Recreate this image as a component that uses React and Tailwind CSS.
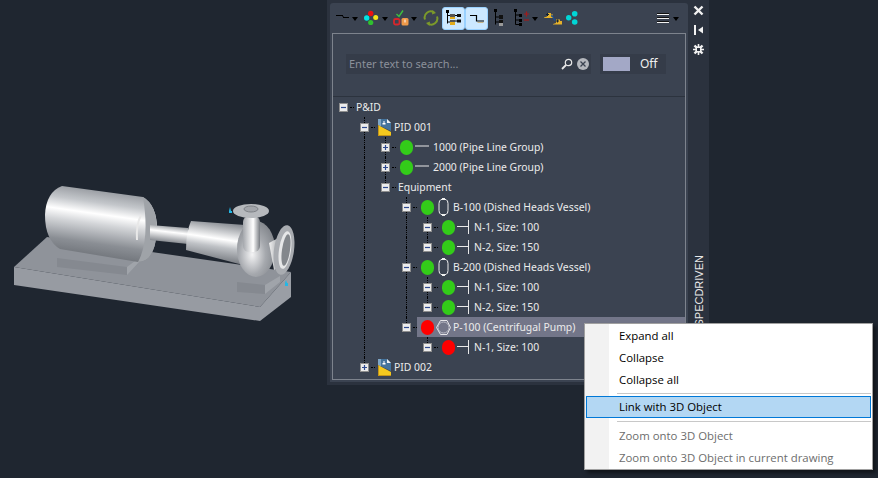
import React from 'react'

const font = { tree: "font-['Noto_Sans',sans-serif]" }

// small black dropdown triangle used by the toolbar
function Caret({ gap = 'ml-[3px]' }) {
  return (
    <svg width="6" height="4" viewBox="0 0 6 4" className={`${gap} mt-[2px]`}>
      <path d="M0 0h6L3 4z" fill="#000" />
    </svg>
  )
}

function LineIcon() {
  return (
    <svg width="13" height="8" viewBox="0 0 13 8">
      <path d="M0 1.500h7M7 3.500h6" stroke="#000" strokeWidth="1.200" fill="none" />
      <path d="M6.500 1.500l1 2" stroke="#000" />
    </svg>
  )
}

function DotsIcon() {
  return (
    <svg width="15" height="17" viewBox="0 0 15 17">
      <circle cx="2.700" cy="8" r="2.700" fill="#00e5e5" />
      <circle cx="6.700" cy="3.500" r="2.700" fill="#ee1111" />
      <circle cx="11.700" cy="7.500" r="2.500" fill="#f5e617" />
      <circle cx="6.700" cy="12.500" r="2.600" fill="#2fc12f" />
    </svg>
  )
}

function CheckIcon() {
  return (
    <svg width="16" height="18" viewBox="0 0 16 18">
      <path d="M3.500 5l2.500 2.500 4-6" stroke="#3fc03f" strokeWidth="1.400" fill="none" />
      <rect x="1" y="10" width="5.500" height="5.500" rx="1.500" fill="none" stroke="#d8262c" strokeWidth="1.800" />
      <rect x="8.500" y="9" width="7" height="7.500" rx="1.500" fill="#ef9a4a" />
      <rect x="11.500" y="10.500" width="1" height="3" fill="#fff" />
    </svg>
  )
}

function RefreshIcon() {
  return (
    <svg width="16" height="16" viewBox="0 0 16 16" fill="none">
      <path d="M2 9.500A6 6 0 0 1 11 2.500" stroke="#7c9a2a" strokeWidth="2" />
      <path d="M14 6.500A6 6 0 0 1 5 13.500" stroke="#7c9a2a" strokeWidth="2" />
      <path d="M9.500 0l3.500 3-4 1.500zM6.500 16L3 13l4-1.500z" fill="#7c9a2a" />
    </svg>
  )
}

function TreePidIcon() {
  return (
    <svg width="15" height="16" viewBox="0 0 15 16">
      <rect x="0" y="0" width="3" height="3" fill="#000" />
      <path d="M1.500 3v10.500M1.500 5.500h3M1.500 12h3" stroke="#000" />
      <rect x="4" y="4" width="5" height="3" fill="#555" />
      <rect x="4" y="7" width="5" height="2" fill="#e3ac1c" />
      <rect x="4" y="10" width="5" height="2" fill="#555" />
      <rect x="4" y="12" width="5" height="3" fill="#e3ac1c" />
      <path d="M9 5.500h2M9 11h2" stroke="#000" />
      <rect x="11" y="4" width="4" height="3" fill="#111" />
      <rect x="11" y="9.500" width="4" height="3" fill="#111" />
    </svg>
  )
}

function StepIcon() {
  return (
    <svg width="14" height="9" viewBox="0 0 14 9">
      <path d="M0 1.500h6.500v5.500H14" stroke="#000" strokeWidth="1.200" fill="none" />
      <path d="M7.500 8.500h6" stroke="#c9b68a" />
    </svg>
  )
}

function BlackTreeIcon() {
  return (
    <svg width="10" height="18" viewBox="0 0 10 18">
      <rect x="0" y="0" width="3" height="3" fill="#000" />
      <path d="M1.500 3v12.500M1.500 8h4M1.500 13h4" stroke="#000" />
      <rect x="5" y="6" width="4" height="4" fill="#111" />
      <rect x="5" y="11" width="4" height="3" fill="#111" />
      <rect x="5" y="14" width="4" height="3" fill="#9a9a9a" />
    </svg>
  )
}

function PlusMinusTreeIcon() {
  return (
    <svg width="16" height="18" viewBox="0 0 16 18">
      <rect x="0" y="0" width="3" height="3" fill="#000" />
      <path d="M1.500 3v12.500M1.500 6h5M1.500 11h5M1.500 15.500h5" stroke="#000" />
      <rect x="5" y="5" width="3" height="3" fill="#000" />
      <rect x="5" y="10" width="3" height="3" fill="#000" />
      <rect x="5" y="14" width="3" height="3" fill="#000" />
      <path d="M10 5h5M12.500 2.500v5" stroke="#a11c1c" strokeWidth="1.200" />
      <path d="M10 11h5" stroke="#a11c1c" strokeWidth="1.200" />
    </svg>
  )
}

function LinkedIcon() {
  return (
    <svg width="18" height="14" viewBox="0 0 18 14">
      <path d="M0 6.500l3-1V2h4v1.500h2V7H0z" fill="#e6b12a" />
      <path d="M2 3.500h3M3.500 2v3" stroke="#123" />
      <path d="M9 13l3-1V8.500h4V10h2v3.500H9z" fill="#e6b12a" />
      <path d="M12 10h3M13.500 8.500v3" stroke="#123" />
      <path d="M7 5h1.500l2 4h1" stroke="#1d4f91" strokeWidth="1.300" fill="none" />
    </svg>
  )
}

function CyanDotsIcon() {
  return (
    <svg width="12" height="14" viewBox="0 0 12 14">
      <circle cx="2.700" cy="6.700" r="2.700" fill="#00d6d6" />
      <circle cx="8.700" cy="2.800" r="2.800" fill="#00d6d6" />
      <circle cx="8.700" cy="11" r="2.800" fill="#00d6d6" />
    </svg>
  )
}

function MenuIcon() {
  return (
    <svg width="12" height="11" viewBox="0 0 12 11">
      <path d="M0 1.500h12M0 5.500h12M0 9.500h12" stroke="#f2f2f2" />
      <path d="M0 .5h12M0 4.500h12M0 8.500h12" stroke="#111" />
    </svg>
  )
}

function Toolbar() {
  return (
    <div className="flex h-[30px] items-center">
      <div className="ml-[4px] flex items-center"><LineIcon /><Caret /></div>
      <div className="ml-[6px] flex items-center"><DotsIcon /><Caret /></div>
      <div className="ml-[5px] flex items-center"><CheckIcon /><Caret gap="ml-[2px]" /></div>
      <div className="ml-[6px] flex items-center"><RefreshIcon /></div>
      <div className="ml-[3px] flex h-[23px] w-[23px] items-center justify-center rounded-[3px] border border-[#99d1ff] bg-[#cce8ff]"><TreePidIcon /></div>
      <div className="flex h-[23px] w-[23px] items-center justify-center rounded-[3px] border border-[#99d1ff] bg-[#cce8ff]"><StepIcon /></div>
      <div className="ml-[6px] flex items-center"><BlackTreeIcon /></div>
      <div className="ml-[10px] flex items-center"><PlusMinusTreeIcon /><Caret gap="ml-[2px]" /></div>
      <div className="ml-[6px] flex items-center"><LinkedIcon /></div>
      <div className="ml-[4px] flex items-center"><CyanDotsIcon /></div>
      <div className="ml-auto mr-[7px] flex items-center"><MenuIcon /><Caret gap="ml-[4px]" /></div>
    </div>
  )
}

function SearchBar() {
  return (
    <div className="flex h-[63px] items-center border-b border-[#2c333e] pb-[2px] pl-[13px]">
      <div className="flex h-[20px] w-[245px] items-center bg-[#353c49] pl-[3px] pr-[2px]">
        <span className="flex-1 font-['Noto_Sans',sans-serif] text-[11px] text-[#8b909a]">Enter text to search...</span>
        <svg width="12" height="12" viewBox="0 0 12 12" fill="none" className="mr-[4px]">
          <circle cx="7.500" cy="4.500" r="3.200" stroke="#e8e8e8" strokeWidth="1.200" />
          <path d="M5 7l-4 4" stroke="#e8e8e8" strokeWidth="1.800" />
        </svg>
        <svg width="12" height="12" viewBox="0 0 12 12">
          <circle cx="6" cy="6" r="6" fill="#b4b7bd" />
          <path d="M3.500 3.500l5 5M8.500 3.500l-5 5" stroke="#3b4351" strokeWidth="1.300" />
        </svg>
      </div>
      <div className="ml-[9px] flex h-[20px] w-[66px] items-center bg-[#353c49] pl-[3px]">
        <div className="h-[14px] w-[27px] bg-[#a3a8c6]" />
        <span className="ml-[10px] font-['Noto_Sans',sans-serif] text-[12px] text-[#f0f0f0]">Off</span>
      </div>
    </div>
  )
}

function Toggle({ open }) {
  return (
    <div className="relative z-10 mt-[1px] flex h-[9px] w-[9px] items-center justify-center border border-[#8e8e8e] bg-[#ececec]">
      <svg width="7" height="7" viewBox="0 0 7 7">
        <path d={open ? 'M1 3.500h5' : 'M1 3.500h5M3.500 1v5'} stroke="#2f4a8f" strokeWidth="1.200" />
      </svg>
    </div>
  )
}

function GreenDot({ color }) {
  return <div className={`mt-[1px] h-[15px] w-[13px] shrink-0 rounded-full ${color === 'red' ? 'bg-[#ff0000]' : 'bg-[#33cc19]'}`} />
}

function PidIcon() {
  return (
    <svg width="15" height="17" viewBox="0 0 15 17" className="-ml-[2px] shrink-0">
      <path d="M1 0h9l4 4v8L1 6z" fill="#44739c" />
      <path d="M10 0l4 4h-4z" fill="#eef2f6" />
      <path d="M1 0h3v7.500L1 6z" fill="#7ea6c6" />
      <path d="M6.500 2h1v2h1v1.500h-3V4h1z" fill="#fff" />
      <path d="M1 6l13 7v4H1z" fill="#f4c81e" />
      <path d="M1 6h1v10h12v1H1z" fill="#c4951a" />
    </svg>
  )
}

function PipeIcon() {
  return (
    <svg width="15" height="3" viewBox="0 0 15 3" className="ml-[2px] mb-[2px] shrink-0">
      <path d="M0 1h14" stroke="#e8e8e8" />
    </svg>
  )
}

function NozzleIcon() {
  return (
    <svg width="12" height="14" viewBox="0 0 12 14" className="ml-[2px] shrink-0">
      <path d="M0 6.500h11M11.500 0v14" stroke="#e8e8e8" />
    </svg>
  )
}

function VesselIcon() {
  return (
    <svg width="11" height="18" viewBox="0 0 11 18" className="ml-[4px] shrink-0" fill="none">
      <path d="M3 1.500h5q2 1 2 4v7q0 3-2 4H3q-2-1-2-4v-7q0-3 2-4z" stroke="#eeeeee" />
      <path d="M4 .5h3M4 17.500h3" stroke="#eeeeee" />
    </svg>
  )
}

function PumpIcon() {
  return (
    <svg width="15" height="15" viewBox="0 0 15 15" className="ml-[2px] shrink-0" fill="none">
      <circle cx="7.500" cy="7.500" r="5.500" stroke="#b9bbc6" />
      <path d="M4.500 .5h6.500l3.500 7-3.500 7H4.500l-4-7z" stroke="#e4e4e8" />
    </svg>
  )
}

function Guide({ up, down, full }) {
  return (
    <>
      {(up || full) && <div className="absolute left-[10px] top-0 h-[10px] w-0 border-l border-dotted border-black" />}
      {(down || full) && <div className="absolute bottom-0 left-[10px] h-[10px] w-0 border-l border-dotted border-black" />}
    </>
  )
}

function Row({ level, open, guides = '', up, down, icons, label, selected, gap }) {
  const cells = []
  for (let i = 0; i < level; i++) {
    cells.push(
      <div key={i} className="relative h-5 w-[21px] shrink-0">
        {guides[i] === '|' && <Guide full />}
      </div>
    )
  }
  return (
    <div className="flex h-5 items-center">
      {cells}
      <div className="relative flex h-5 w-[21px] shrink-0 items-center pl-[6px]">
        <Guide up={up} down={down} />
        <Toggle open={open} />
        <div className="ml-[2px] mt-[1px] h-0 w-[4px] border-t border-dotted border-black" />
      </div>
      <div className={`flex h-5 flex-1 items-center pl-[4px] ${selected ? 'bg-[#737689]' : ''}`}>
        {icons}
        <span className={`${font.tree} mt-[1px] whitespace-nowrap text-[10.4px] text-[#ececec] ${gap}`}>{label}</span>
      </div>
    </div>
  )
}

const pipe = <><GreenDot /><PipeIcon /></>
const nozzle = <><GreenDot /><NozzleIcon /></>
const nozzleRed = <><GreenDot color="red" /><NozzleIcon /></>
const vessel = <><GreenDot /><VesselIcon /></>

function Tree() {
  return (
    <div className="flex-1">
      <Row level={0} open label="P&ID" gap="-ml-[2px]" />
      <Row level={1} open up down icons={<PidIcon />} label="PID 001" gap="ml-[2px]" />
      <Row level={2} guides=" |" up down icons={pipe} label="1000 (Pipe Line Group)" gap="ml-[3px]" />
      <Row level={2} guides=" |" up down icons={pipe} label="2000 (Pipe Line Group)" gap="ml-[3px]" />
      <Row level={2} open guides=" |" up icons={null} label="Equipment" gap="-ml-[2px]" />
      <Row level={3} open guides=" | " up down icons={vessel} label="B-100 (Dished Heads Vessel)" gap="ml-[4px]" />
      <Row level={4} open guides=" | |" up down icons={nozzle} label="N-1, Size: 100" gap="ml-[5px]" />
      <Row level={4} open guides=" | |" up icons={nozzle} label="N-2, Size: 150" gap="ml-[5px]" />
      <Row level={3} open guides=" | " up down icons={vessel} label="B-200 (Dished Heads Vessel)" gap="ml-[4px]" />
      <Row level={4} open guides=" | |" up down icons={nozzle} label="N-1, Size: 100" gap="ml-[5px]" />
      <Row level={4} open guides=" | |" up icons={nozzle} label="N-2, Size: 150" gap="ml-[5px]" />
      <Row level={3} open guides=" | " up selected icons={<><GreenDot color="red" /><PumpIcon /></>} label="P-100 (Centrifugal Pump)" gap="ml-[2px]" />
      <Row level={4} open guides=" |  " up icons={nozzleRed} label="N-1, Size: 100" gap="ml-[5px]" />
      <Row level={1} up icons={<PidIcon />} label="PID 002" gap="ml-[2px]" />
    </div>
  )
}

function SideStrip() {
  return (
    <div className="flex w-[21px] flex-col items-center pt-[2px]">
      <svg width="11" height="11" viewBox="0 0 11 11">
        <path d="M1.500 1.500l8 8M9.500 1.500l-8 8" stroke="#f2f2f2" strokeWidth="2.400" />
      </svg>
      <svg width="10" height="10" viewBox="0 0 10 10" className="mt-[9px]">
        <path d="M1 0v10" stroke="#f2f2f2" strokeWidth="2" />
        <path d="M9 1.500v7L4 5z" fill="#f2f2f2" />
      </svg>
      <svg width="11" height="11" viewBox="0 0 11 11" className="mt-[9px]">
        <path d="M1.500 1.500l8 8M9.500 1.500l-8 8" stroke="#f2f2f2" strokeWidth="2.400" />
        <path d="M5.500 0v11M0 5.500h11" stroke="#f2f2f2" strokeWidth="1.600" />
        <rect x="2.500" y="2.500" width="6" height="6" fill="#f2f2f2" />
        <rect x="4" y="4" width="3" height="3" fill="#2b323e" />
      </svg>
      <div className="flex-1" />
      <div className="mb-[58px] rotate-180 font-['Liberation_Sans',sans-serif] text-[11px] leading-[12px] text-[#e8e8e8] [writing-mode:vertical-rl]">SPECDRIVEN</div>
    </div>
  )
}

function Pump3D() {
  return (
    <svg width="300" height="150" viewBox="0 180 300 150" className="mt-[180px] shrink-0">
      <defs>
        <linearGradient id="motor" gradientUnits="userSpaceOnUse" x1="106" y1="188" x2="96" y2="258">
          <stop offset="0" stopColor="#8e9298" />
          <stop offset="0.22" stopColor="#c4c7cb" />
          <stop offset="0.38" stopColor="#ffffff" />
          <stop offset="0.52" stopColor="#d4d6d9" />
          <stop offset="0.8" stopColor="#8a8e94" />
          <stop offset="1" stopColor="#70747a" />
        </linearGradient>
        <linearGradient id="shaft" gradientUnits="userSpaceOnUse" x1="170" y1="226" x2="168" y2="243">
          <stop offset="0" stopColor="#9a9ea3" />
          <stop offset="0.35" stopColor="#ffffff" />
          <stop offset="1" stopColor="#7d8187" />
        </linearGradient>
        <linearGradient id="housing" gradientUnits="userSpaceOnUse" x1="216" y1="222" x2="210" y2="262">
          <stop offset="0" stopColor="#8c9096" />
          <stop offset="0.4" stopColor="#ffffff" />
          <stop offset="0.6" stopColor="#bfc2c6" />
          <stop offset="1" stopColor="#6f7379" />
        </linearGradient>
        <radialGradient id="casing" cx="0.4" cy="0.6" r="0.7">
          <stop offset="0" stopColor="#f4f4f5" />
          <stop offset="0.5" stopColor="#a6a9ae" />
          <stop offset="1" stopColor="#7c8086" />
        </radialGradient>
        <linearGradient id="neck" x1="0" y1="0" x2="1" y2="0">
          <stop offset="0" stopColor="#a4a7ac" />
          <stop offset="0.6" stopColor="#ffffff" />
          <stop offset="1" stopColor="#777b81" />
        </linearGradient>
        <linearGradient id="flange" x1="0" y1="0" x2="1" y2="0">
          <stop offset="0" stopColor="#f0f0f0" />
          <stop offset="1" stopColor="#8f9399" />
        </linearGradient>
      </defs>
      {/* skid */}
      <path d="M14 267L47 237L291 272L260 307Z" fill="#8f939a" />
      <path d="M14 267L260 307V321L14 285Z" fill="#979ba2" />
      <path d="M260 307L291 272V297L260 321Z" fill="#9a9ea5" />
      {/* feet */}
      <path d="M57 258L127 267V275L57 267Z" fill="#858990" />
      <path d="M127 267L139 258V262L127 275Z" fill="#a0a4aa" />
      <path d="M237 282L265 285V294L237 292Z" fill="#858990" />
      <path d="M265 285L280 276V282L265 294Z" fill="#a0a4aa" />
      {/* motor */}
      <path d="M62 186L143 197Q157 205 157 230Q155 262 138 262L60 249Q45 240 45 215Q46 192 62 186Z" fill="url(#motor)" />
      <path d="M143 197Q157 205 157 230Q155 262 138 262Q150 240 143 197Z" fill="#9fa3a8" />
      <path d="M137 240Q136 225 141 215" stroke="#e8e8e8" strokeWidth="2" fill="none" />
      {/* shaft and bearing housing */}
      <path d="M150 225L188 228V244L150 240Z" fill="url(#shaft)" />
      <path d="M191 221L245 225L243 265L186 250Q186 232 191 221Z" fill="url(#housing)" />
      {/* casing */}
      <ellipse cx="256" cy="249" rx="19" ry="28" fill="url(#casing)" />
      <rect x="243" y="216" width="17" height="36" rx="6" fill="url(#neck)" />
      <ellipse cx="251" cy="211" rx="18" ry="7" fill="#b6b9bd" />
      <ellipse cx="251" cy="209" rx="7" ry="3" fill="#a2a5aa" stroke="#7e8287" />
      {/* discharge flange */}
      <path d="M269 243L282 236V268L274 270Z" fill="url(#flange)" />
      <ellipse cx="284" cy="250" rx="10" ry="25" transform="rotate(8 284 250)" fill="#a9acb1" />
      <ellipse cx="285" cy="250" rx="6" ry="19" transform="rotate(8 285 250)" fill="#e6e7e8" />
      <ellipse cx="286" cy="250" rx="4" ry="16" transform="rotate(8 286 250)" fill="#83878c" />
      {/* connection markers */}
      <path d="M230 207l1 4h1v2h-3v-2z" fill="#23b7e5" />
      <path d="M286 280l1 3h1v3h-3v-3z" fill="#23b7e5" />
    </svg>
  )
}

function MenuItem({ children, disabled, active }) {
  return (
    <div className={`flex h-[22px] items-center font-['Open_Sans',sans-serif] text-[11.4px] ${disabled ? 'text-[#6d6d6d]' : 'text-[#000]'} ${active ? 'mx-[1px] border border-[#0078d7] bg-[#b3d7f3] pl-[32px]' : 'pl-[34px]'}`}>
      {children}
    </div>
  )
}

function ContextMenu() {
  return (
    <div className="absolute left-[584px] top-[323px] h-[147px] w-[289px] border border-[#a0a0a0] bg-[#ffffff] shadow-[3px_3px_4px_rgba(0,0,0,0.5)]">
      <div className="absolute bottom-0 left-0 top-0 w-[24px] bg-[#f2f2f2]" />
      <div className="relative pt-[1px]">
        <MenuItem>Expand all</MenuItem>
        <MenuItem>Collapse</MenuItem>
        <MenuItem>Collapse all</MenuItem>
        <div className="my-[2px] ml-[32px] mr-[1px] h-px bg-[#c8c8c8]" />
        <MenuItem active>Link with 3D Object</MenuItem>
        <div className="my-[3px] ml-[32px] mr-[1px] h-px bg-[#c8c8c8]" />
        <MenuItem disabled>Zoom onto 3D Object</MenuItem>
        <MenuItem disabled>Zoom onto 3D Object in current drawing</MenuItem>
      </div>
    </div>
  )
}

export default function App() {
  return (
    <div className="relative flex h-[478px] w-[878px] overflow-hidden bg-[#1f2630]">
      <div className="w-[327px] shrink-0"><Pump3D /></div>
      <div className="flex h-[385px] w-[382px] shrink-0 bg-[#2b323e] pl-[3px] pt-[3px]">
        <div className="flex h-[379px] w-[358px] flex-col rounded-t-[3px] bg-[#3b4351] pb-[2px] pl-[2px] pr-[2px]">
          <Toolbar />
          <div className="flex flex-1 flex-col border border-[#7d838d]">
            <SearchBar />
            <Tree />
          </div>
        </div>
        <SideStrip />
      </div>
      <ContextMenu />
    </div>
  )
}
